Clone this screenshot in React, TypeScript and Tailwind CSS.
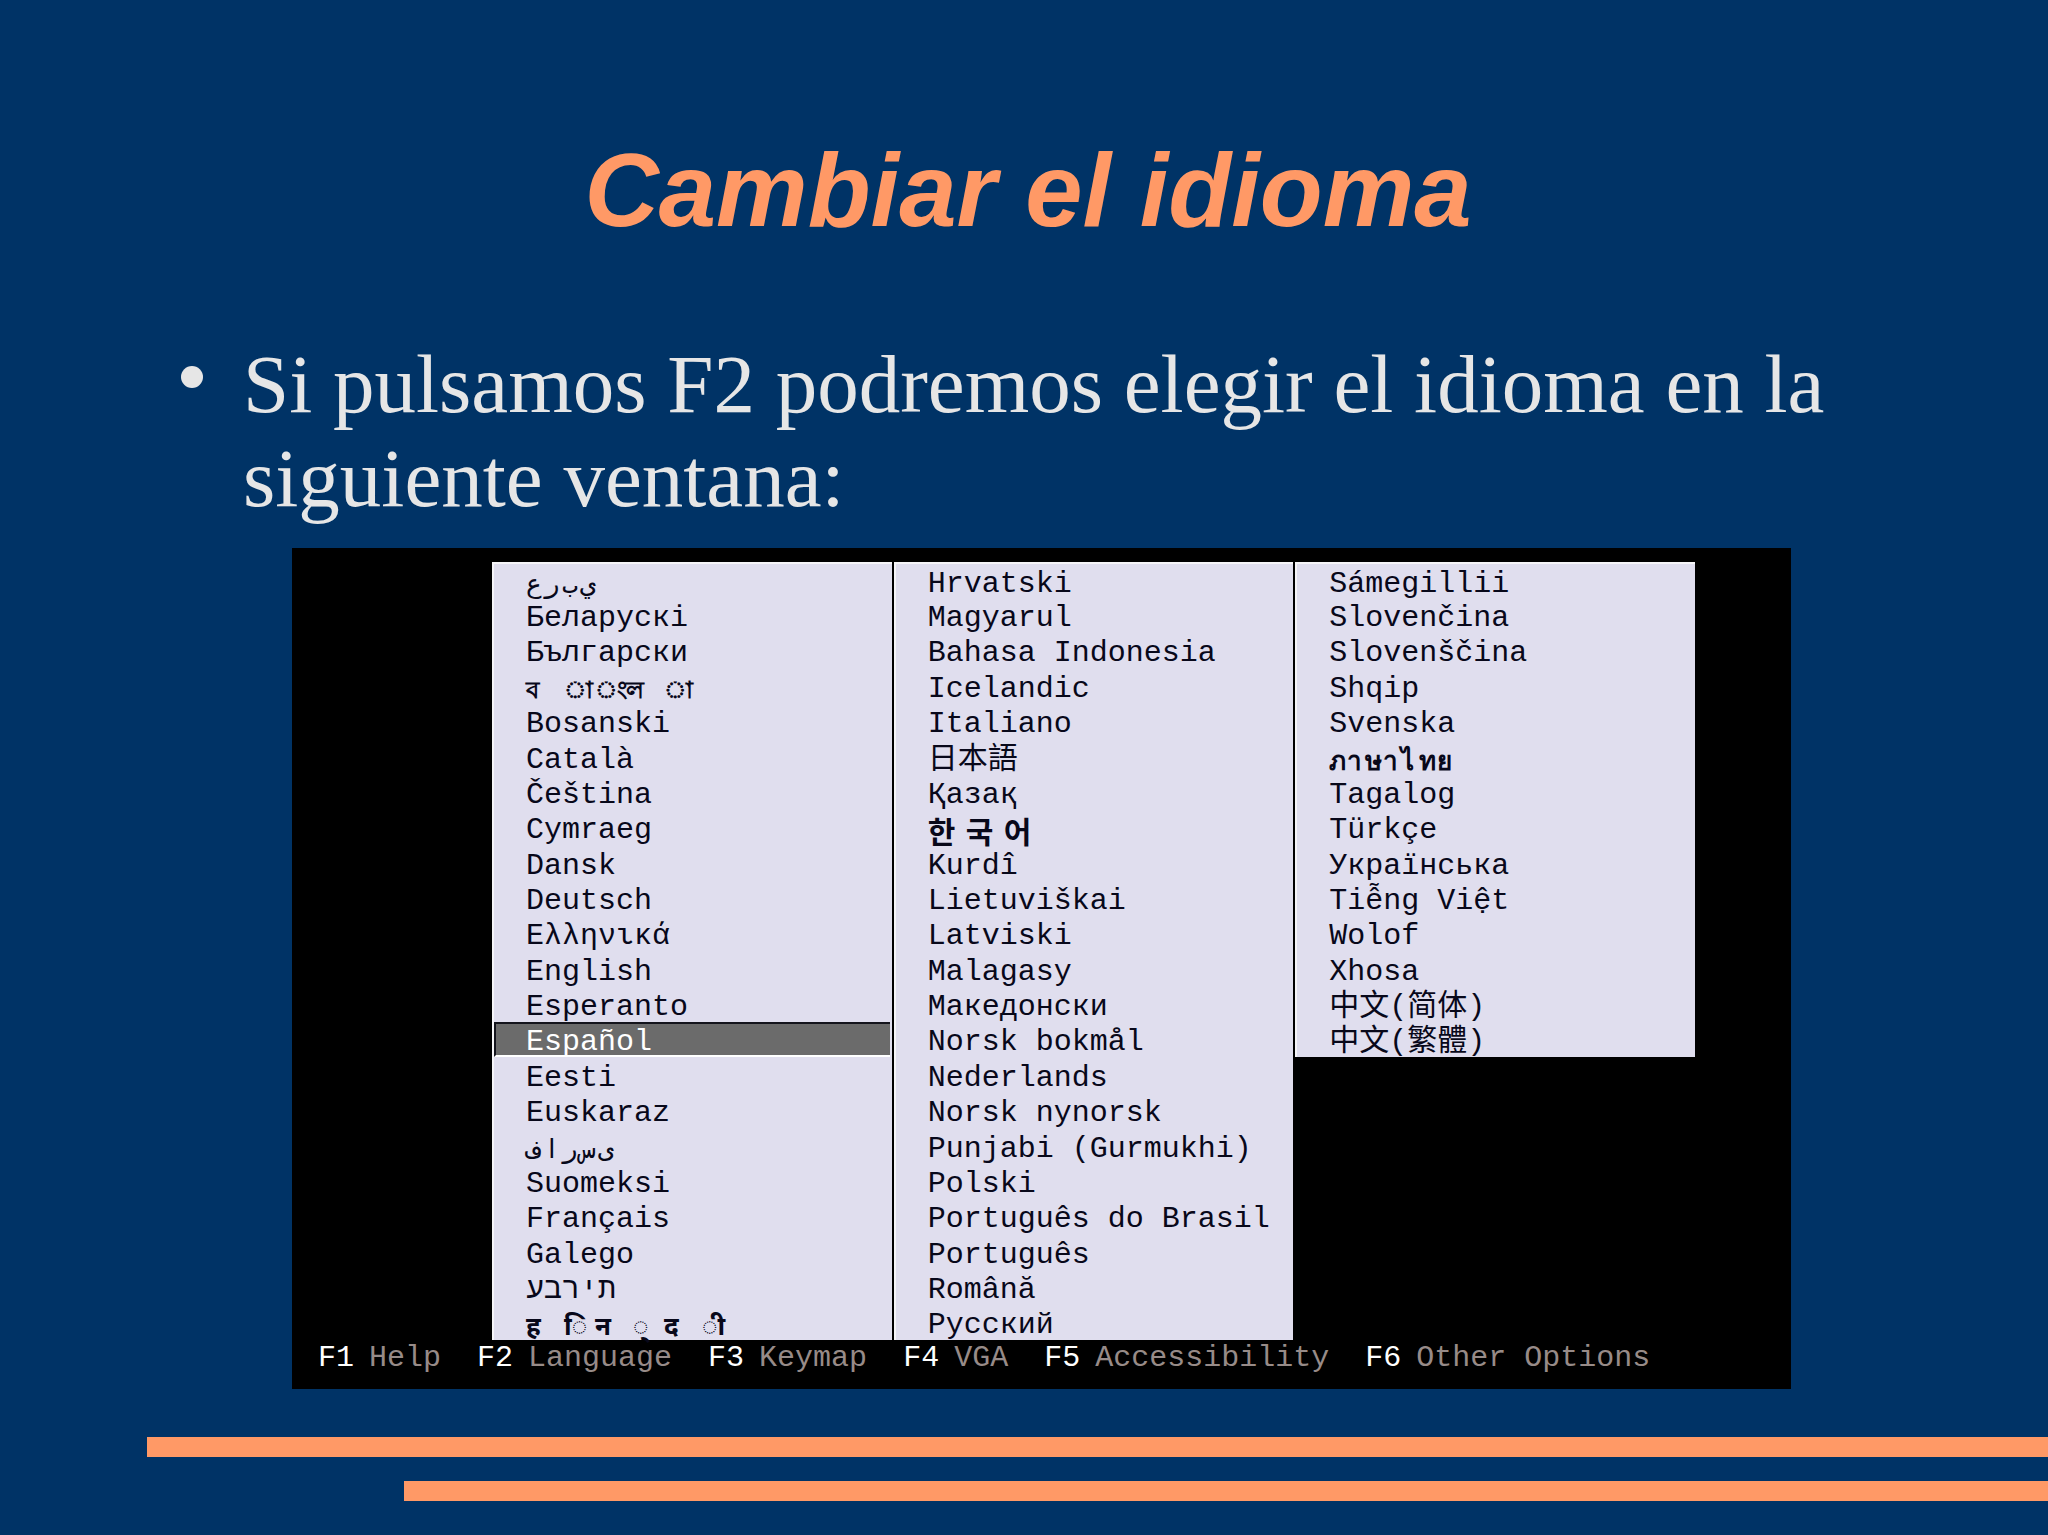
import { clsx } from 'clsx'
import { useState } from 'react'

type Script = 'latin' | 'arabic' | 'hebrew' | 'bengali' | 'devanagari' | 'thai' | 'cjk' | 'hangul'

type Language = {
  name: string
  script?: Script
}

const COLUMNS: Language[][] = [
  [
    { name: 'عربي', script: 'arabic' },
    { name: 'Беларускі' },
    { name: 'Български' },
    { name: 'বাংলা', script: 'bengali' },
    { name: 'Bosanski' },
    { name: 'Català' },
    { name: 'Čeština' },
    { name: 'Cymraeg' },
    { name: 'Dansk' },
    { name: 'Deutsch' },
    { name: 'Ελληνικά' },
    { name: 'English' },
    { name: 'Esperanto' },
    { name: 'Español' },
    { name: 'Eesti' },
    { name: 'Euskaraz' },
    { name: 'فارسی', script: 'arabic' },
    { name: 'Suomeksi' },
    { name: 'Français' },
    { name: 'Galego' },
    { name: 'עברית', script: 'hebrew' },
    { name: 'हिन्दी', script: 'devanagari' },
  ],
  [
    { name: 'Hrvatski' },
    { name: 'Magyarul' },
    { name: 'Bahasa Indonesia' },
    { name: 'Icelandic' },
    { name: 'Italiano' },
    { name: '日本語', script: 'cjk' },
    { name: 'Қазақ' },
    { name: '한국어', script: 'hangul' },
    { name: 'Kurdî' },
    { name: 'Lietuviškai' },
    { name: 'Latviski' },
    { name: 'Malagasy' },
    { name: 'Македонски' },
    { name: 'Norsk bokmål' },
    { name: 'Nederlands' },
    { name: 'Norsk nynorsk' },
    { name: 'Punjabi (Gurmukhi)' },
    { name: 'Polski' },
    { name: 'Português do Brasil' },
    { name: 'Português' },
    { name: 'Română' },
    { name: 'Русский' },
  ],
  [
    { name: 'Sámegillii' },
    { name: 'Slovenčina' },
    { name: 'Slovenščina' },
    { name: 'Shqip' },
    { name: 'Svenska' },
    { name: 'ภาษาไทย', script: 'thai' },
    { name: 'Tagalog' },
    { name: 'Türkçe' },
    { name: 'Українська' },
    { name: 'Tiễng Việt' },
    { name: 'Wolof' },
    { name: 'Xhosa' },
    { name: '中文(简体)', script: 'cjk' },
    { name: '中文(繁體)', script: 'cjk' },
  ],
]

const FUNCTION_KEYS = [
  { key: 'F1', label: 'Help' },
  { key: 'F2', label: 'Language' },
  { key: 'F3', label: 'Keymap' },
  { key: 'F4', label: 'VGA' },
  { key: 'F5', label: 'Accessibility' },
  { key: 'F6', label: 'Other Options' },
]

const SCRIPT_STYLES: Record<Script, string> = {
  latin: "font-['Liberation_Mono','DejaVu_Sans_Mono',monospace] text-[30px]",
  arabic: "font-['DejaVu_Sans_Mono',monospace] text-[26px]",
  hebrew: "font-['Liberation_Mono','DejaVu_Sans_Mono',monospace] text-[30px]",
  bengali: "font-['Noto_Sans',sans-serif] text-[24px] font-bold",
  devanagari: "font-['Noto_Sans',sans-serif] text-[26px] font-bold",
  thai: "font-['Noto_Sans',sans-serif] text-[26px] font-bold",
  cjk: "font-['Liberation_Mono','Noto_Sans_CJK_SC',sans-serif] text-[30px]",
  hangul: "font-['Noto_Sans_CJK_KR',sans-serif] text-[30px] font-bold",
}

// The boot loader has no text shaping: these scripts go out one code point per cell, left to right.
const CELL_WIDTHS: Partial<Record<Script, string>> = {
  arabic: 'w-[18px]',
  hebrew: 'w-[18px]',
  bengali: 'w-[38px]',
  devanagari: 'w-[38px]',
  thai: 'w-[18px]',
  hangul: 'w-[38px]',
}

function cellWidth(script: Script, char: string) {
  return /\p{M}/u.test(char) && script !== 'thai' ? 'w-[31px]' : CELL_WIDTHS[script]
}

function LanguageName({ name, script = 'latin' }: Language) {
  if (!CELL_WIDTHS[script]) return <span>{name}</span>

  return (
    <>
      {[...name].map((char, index) => (
        <span key={index} className={clsx('shrink-0', cellWidth(script, char))}>
          {char}
        </span>
      ))}
    </>
  )
}

function LanguageOption({
  language,
  selected,
  onSelect,
}: {
  language: Language
  selected: boolean
  onSelect: () => void
}) {
  return (
    <li className="flex min-h-0 pr-[2px]">
      <button
        type="button"
        aria-pressed={selected}
        onClick={onSelect}
        className={clsx(
          'flex w-full items-center border-y-2 border-l-2 pt-[6px] pl-[30px] text-left leading-[30px] whitespace-nowrap',
          selected
            ? 'border-t-[#14141c] border-b-white border-l-[#14141c] bg-[#6b6b6b] text-white'
            : 'border-transparent text-[#08081a]',
          SCRIPT_STYLES[language.script ?? 'latin']
        )}
      >
        <LanguageName {...language} />
      </button>
    </li>
  )
}

function BootMenu() {
  const [selected, setSelected] = useState('Español')

  return (
    <section className="bg-black pt-[14px] pb-[13px]">
      <div className="grid h-[778px] grid-cols-3 grid-rows-[repeat(22,minmax(0,1fr))] gap-x-[2px] pr-24 pl-[200px]">
        {COLUMNS.map((column, index) => (
          <ul
            key={index}
            className={clsx(
              'grid grid-rows-subgrid border-t-2 border-l-2 border-[#f6f5f8] bg-[#e0deee]',
              column.length === 22 ? 'row-span-22' : 'row-span-14'
            )}
          >
            {column.map((language) => (
              <LanguageOption
                key={language.name}
                language={language}
                selected={language.name === selected}
                onSelect={() => setSelected(language.name)}
              />
            ))}
          </ul>
        ))}
      </div>
      <nav className="flex gap-x-9 pl-[26px] font-['Liberation_Mono',monospace] text-[30px] leading-[36px] whitespace-nowrap">
        {FUNCTION_KEYS.map(({ key, label }) => (
          <button key={key} type="button" className="flex gap-x-[15px] text-[#978b88]">
            <span className="text-white">{key}</span>
            {label}
          </button>
        ))}
      </nav>
    </section>
  )
}

export default function App() {
  return (
    <main className="min-h-screen bg-[#003366] pt-[131px]">
      <h1 className="pl-2 text-center font-['Liberation_Sans',sans-serif] text-[103px] leading-[120px] font-bold text-[#ff9966] italic">
        Cambiar el idioma
      </h1>
      <ul className="pt-[86px] pr-[200px] pl-[181px] text-[#e6e6e6]">
        <li className="flex gap-x-10">
          <span className="mt-[29px] size-[22px] shrink-0 rounded-full bg-[#e6e6e6]" />
          <p className="font-['Liberation_Serif',serif] text-[83px] leading-[94px]">
            Si pulsamos F2 podremos elegir el idioma en la siguiente ventana:
          </p>
        </li>
      </ul>
      <div className="pt-[23px] pr-[257px] pl-[292px]">
        <BootMenu />
      </div>
      <div className="flex flex-col gap-y-6 pt-12">
        <div className="ml-[147px] h-5 bg-[#ff9966]" />
        <div className="ml-[404px] h-5 bg-[#ff9966]" />
      </div>
    </main>
  )
}
